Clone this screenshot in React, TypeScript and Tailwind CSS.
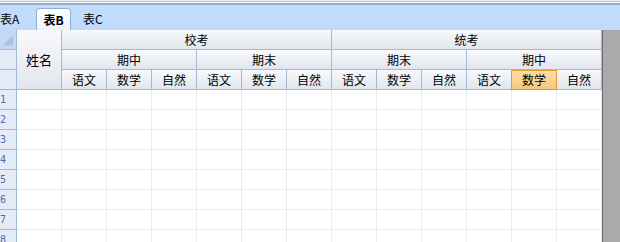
import React from "react";

const subjects = ["语文", "数学", "自然"];
const groups = [
  { exam: "校考", terms: ["期中", "期末"] },
  { exam: "统考", terms: ["期末", "期中"] },
];

const head =
  "flex items-center justify-center border-r border-b border-[#a2bad6] bg-linear-to-b from-[#f8f9fb] to-[#e1e6ee] text-[12px] text-black";

export default function App() {
  const rows = [1, 2, 3, 4, 5, 6, 7, 8];

  return (
    <div
      className="w-[620px] h-[242px] overflow-hidden bg-white flex flex-col"
      style={{ fontFamily: '"Noto Sans CJK SC", "Liberation Sans", sans-serif' }}
    >
      {/* window top edge */}
      <div className="h-px bg-[#e3ecf2]" />
      <div className="h-px bg-[#b5cfd2]" />
      <div className="h-px bg-[#f4f8fb]" />
      <div className="h-[2px] bg-[#9cacc6]" />

      {/* sheet tabs */}
      <div className="h-[25px] bg-[#c1dbfd] flex items-end text-[12px] text-black">
        <div className="w-[36px] h-[22px] flex items-center pl-0">表A</div>
        <div className="w-[35px] h-[22px] flex items-center justify-center rounded-t-[4px] border border-b-0 border-[#8eb0d8] bg-linear-to-b from-white to-[#edf3fb] font-bold">
          表B
        </div>
        <div className="w-[40px] h-[22px] flex items-center pl-[12px]">表C</div>
      </div>

      <div className="flex flex-1 min-h-0">
        <div className="w-[602px] flex flex-col">
          {/* header */}
          <div className="grid grid-cols-[17px_45px_repeat(12,45px)] grid-rows-[20px_20px_20px]">
            <div className="border-r border-b border-[#a2bad6] bg-[#c5d8f1] flex items-end justify-end p-[3px]">
              <svg width="11" height="11" viewBox="0 0 11 11">
                <polygon points="11,0 11,11 0,11" fill="#a7c1e6" />
              </svg>
            </div>
            <div className={`${head} row-span-3 text-[13px]`}>姓名</div>
            {groups.map((g) => (
              <div key={g.exam} className={`${head} col-span-6`}>
                {g.exam}
              </div>
            ))}

            <div className="col-start-1 row-start-2 border-r border-b border-[#a2bad6] bg-[#e4ecf7]" />
            {groups.flatMap((g, gi) =>
              g.terms.map((t, ti) => (
                <div key={`${gi}-${ti}`} className={`${head} col-span-3`}>
                  {t}
                </div>
              ))
            )}

            <div className="col-start-1 row-start-3 border-r border-b border-[#a2bad6] bg-[#e4ecf7]" />
            {Array.from({ length: 12 }).map((_, i) =>
              i === 10 ? (
                <div
                  key={i}
                  className="flex items-center justify-center border border-[#f0962e] -ml-px bg-linear-to-b from-[#fae0ae] to-[#f5c679] text-[12px] text-black"
                >
                  {subjects[i % 3]}
                </div>
              ) : (
                <div key={i} className={head}>
                  {subjects[i % 3]}
                </div>
              )
            )}
          </div>

          {/* body rows */}
          {rows.map((r) => (
            <div key={r} className="grid grid-cols-[17px_45px_repeat(12,45px)] h-[20px] shrink-0">
              <div
                className="border-r border-b border-[#a2bad6] bg-[#e4ecf7] flex items-center text-[10px] text-[#3f72b0]"
                style={{ fontFamily: '"DejaVu Sans Mono", monospace' }}
              >
                {r}
              </div>
              {Array.from({ length: 13 }).map((_, i) => (
                <div key={i} className="border-r border-b border-[#ebebeb]" />
              ))}
            </div>
          ))}
        </div>
        <div className="w-px bg-[#6c6c6c]" />
        <div className="flex-1 bg-[#aaaaaa]" />
      </div>
    </div>
  );
}
